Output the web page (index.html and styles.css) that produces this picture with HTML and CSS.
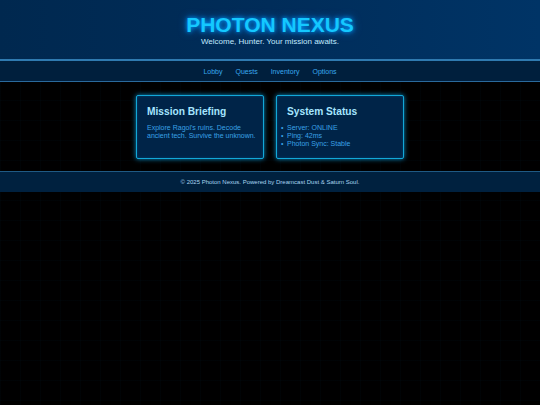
FILE: index.html
```html
<!DOCTYPE html>
<html lang="en">
<head>
<meta charset="utf-8">
<title>Photon Nexus</title>
<link rel="stylesheet" href="styles.css">
</head>
<body>
<header class="site-header">
  <h1 class="title">PHOTON NEXUS</h1>
  <p class="subtitle">Welcome, Hunter. Your mission awaits.</p>
</header>
<nav class="nav">
  <a href="#" class="nav-link">Lobby</a>
  <a href="#" class="nav-link">Quests</a>
  <a href="#" class="nav-link">Inventory</a>
  <a href="#" class="nav-link">Options</a>
</nav>
<main class="main">
  <section class="card">
    <h2 class="card-title">Mission Briefing</h2>
    <p class="card-text">Explore Ragol's ruins. Decode ancient tech. Survive the unknown.</p>
  </section>
  <section class="card">
    <h2 class="card-title">System Status</h2>
    <ul class="status-list">
      <li>Server: ONLINE</li>
      <li>Ping: 42ms</li>
      <li>Photon Sync: Stable</li>
    </ul>
  </section>
</main>
<footer class="footer">
  <p class="footer-text">© 2025 Photon Nexus. Powered by Dreamcast Dust &amp; Saturn Soul.</p>
</footer>
</body>
</html>
```
FILE: styles.css
```css
html, body {
  margin: 0;
  padding: 0;
}
body {
  background-color: #000;
  background-image:
    linear-gradient(rgba(0, 90, 140, 0.04) 1px, transparent 1px),
    linear-gradient(90deg, rgba(0, 90, 140, 0.04) 1px, transparent 1px);
  background-size: 20px 20px;
  font-family: "Liberation Sans", Arial, sans-serif;
  min-height: 405px;
}
.site-header {
  height: 61px;
  box-sizing: border-box;
  padding-top: 13px;
  text-align: center;
  background: linear-gradient(90deg, #00284f 0%, #002d5a 50%, #003466 100%);
  border-bottom: 2px solid #2f7ab0;
}
.title {
  margin: 0;
  font-size: 21px;
  line-height: 24px;
  font-weight: bold;
  color: #14c8ff;
  text-shadow: 0 0 4px #0099ff, 0 0 9px #0077dd;
}
.subtitle {
  margin: 0;
  font-size: 8px;
  line-height: 10px;
  color: #c0eaff;
}
.nav {
  height: 21px;
  box-sizing: border-box;
  display: flex;
  justify-content: center;
  align-items: center;
  gap: 13px;
  background: #001f3d;
  border-bottom: 1px solid #2a6a9c;
}
.nav-link {
  font-size: 7px;
  color: #39a8ee;
  text-decoration: none;
}
.main {
  display: flex;
  justify-content: center;
  gap: 12px;
  padding: 13px 0 12px;
}
.card {
  width: 128px;
  height: 64px;
  box-sizing: border-box;
  padding: 10px 6px 10px 10px;
  background: #002448;
  border: 1px solid #12a8d8;
  border-radius: 2px;
  box-shadow: 0 0 5px #0a8fc8, inset 0 0 3px rgba(0, 160, 220, 0.25);
}
.card-title {
  margin: 0 0 6px;
  font-size: 10.2px;
  line-height: 12px;
  font-weight: bold;
  color: #a6e6ff;
}
.card-text {
  margin: 0;
  font-size: 7px;
  line-height: 8px;
  color: #3aa2e6;
}
.status-list {
  margin: 0;
  padding-left: 0;
  list-style: none;
  font-size: 7px;
  line-height: 8px;
  color: #3aa2e6;
}
.status-list li::before {
  content: "\2022";
  display: inline-block;
  width: 6px;
  margin-left: -6px;
}
.footer {
  height: 21px;
  box-sizing: border-box;
  display: flex;
  align-items: center;
  justify-content: center;
  background: #00213f;
  border-top: 1px solid #1f5a84;
}
.footer-text {
  margin: 0;
  font-size: 6px;
  color: #a8d4f0;
}
```
